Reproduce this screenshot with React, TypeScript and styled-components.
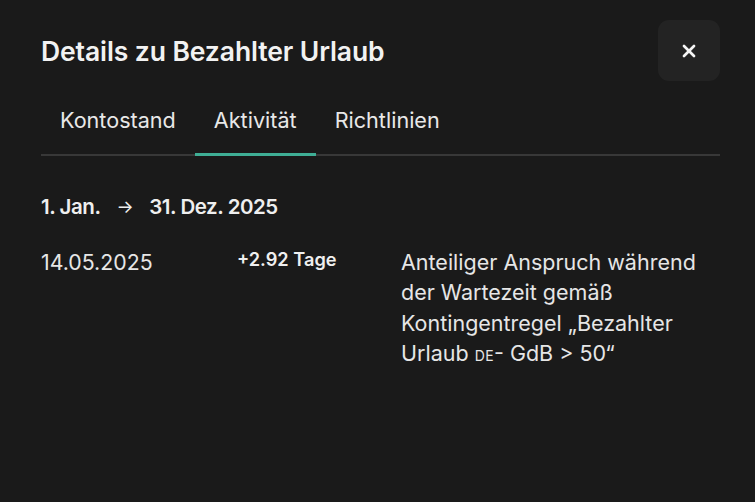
import styled, { createGlobalStyle } from "styled-components"
import { X } from "lucide-react"

const GlobalStyle = createGlobalStyle`
  html, body {
    margin: 0;
    padding: 0;
    background: #1a1a1a;
  }
  body {
    font-family: Inter, "Noto Sans", sans-serif;
    color: #ececec;
  }
`

const Panel = styled.div`
  width: 755px;
  height: 502px;
  box-sizing: border-box;
  padding: 20px 35px 0 41px;
  background: #1a1a1a;
`

const Header = styled.div`
  display: flex;
  justify-content: space-between;
  align-items: flex-start;
`

const Title = styled.h1`
  margin: 0;
  padding-top: 15px;
  font-size: 26.5px;
  font-weight: 600;
  letter-spacing: -0.1px;
  color: #f2f2f2;
`

const CloseButton = styled.button`
  width: 62px;
  height: 61px;
  border: none;
  border-radius: 11px;
  background: #232323;
  color: #f5f5f5;
  display: flex;
  align-items: center;
  justify-content: center;
  cursor: pointer;
`

const Tabs = styled.div`
  display: flex;
  margin-top: 22px;
  border-bottom: 2px solid #383838;
`

const Tab = styled.div<{ $active?: boolean }>`
  padding: 4px 19px 21px;
  font-size: 21.6px;
  font-weight: 400;
  color: #e8e8e8;
  position: relative;
  &:after {
    content: '';
    position: absolute;
    left: 0;
    right: 0;
    bottom: -2px;
    height: 3px;
    background: ${props => (props.$active ? "#3fae95" : "transparent")};
  }
`

const Range = styled.div`
  display: flex;
  align-items: center;
  gap: 16px;
  margin-top: 38px;
  font-size: 20.5px;
  font-weight: 600;
  letter-spacing: -0.45px;
  color: #efefef;
`

const Arrow = styled.span`
  font-weight: 400;
  font-size: 18px;
`

const EntryRow = styled.div`
  display: grid;
  grid-template-columns: 196px 164px 1fr;
  margin-top: 28px;
`

const EntryDate = styled.div`
  font-size: 21.3px;
  line-height: 30px;
  color: #e6e6e6;
`

const Amount = styled.div`
  font-size: 18.2px;
  font-weight: 600;
  line-height: 24px;
  color: #efefef;
`

const Description = styled.div`
  max-width: 318px;
  font-size: 21.5px;
  line-height: 30.4px;
  color: #e6e6e6;
`

const Region = styled.span`
  font-size: 14px;
  text-transform: uppercase;
  letter-spacing: 0.4px;
`

export default function App() {
  const tabs = ["Kontostand", "Aktivität", "Richtlinien"]
  return (
    <>
      <GlobalStyle />
      <Panel>
        <Header>
          <Title>Details zu Bezahlter Urlaub</Title>
          <CloseButton aria-label="Schließen">
            <X size={20} strokeWidth={3.2} />
          </CloseButton>
        </Header>
        <Tabs>
          {tabs.map(t => (
            <Tab key={t} $active={t === "Aktivität"}>{t}</Tab>
          ))}
        </Tabs>
        <Range>
          <span>1. Jan.</span>
          <Arrow>→</Arrow>
          <span>31. Dez. 2025</span>
        </Range>
        <EntryRow>
          <EntryDate>14.05.2025</EntryDate>
          <Amount>+2.92 Tage</Amount>
          <Description>
            Anteiliger Anspruch während der Wartezeit gemäß Kontingentregel „Bezahlter Urlaub <Region>de</Region>- GdB &gt; 50“
          </Description>
        </EntryRow>
      </Panel>
    </>
  )
}
